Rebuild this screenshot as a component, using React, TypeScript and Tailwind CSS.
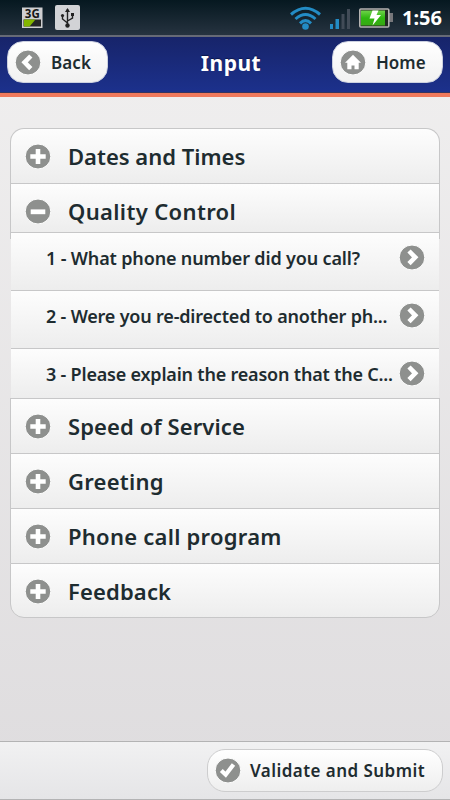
import type { ReactNode } from 'react';

type IconName = 'plus' | 'minus' | 'right' | 'left' | 'home' | 'check';

const ICONS: Record<IconName, ReactNode> = {
  plus: <path d="M13 5v15M5.3 12.5h15.4" strokeWidth="4.6" />,
  minus: <path d="M5.7 12.8h14.6" strokeWidth="4.8" />,
  right: <path d="M10 6l6.2 6.3-6.2 6.3" strokeWidth="4.6" />,
  left: <path d="M15.8 6l-6.2 6.3 6.2 6.3" strokeWidth="4.6" />,
  home: <path d="M13 4.8l8 7.9h-2.3v6.6h-4.2v-3.8h-3v3.8H7.300v-6.600H5z" fill="#fff" stroke="none" />,
  check: <path d="M6.3 12.500l4.400 4.200 7.800-10.200" strokeWidth="4.2" />,
};

function CircleIcon({ name }: { name: IconName }) {
  return (
    <svg width="26" height="25" viewBox="0 0 26 25" fill="none" stroke="#fff" className="shrink-0" aria-hidden="true">
      <ellipse cx="13" cy="12.5" rx="12.8" ry="12.5" fill="#8e908e" />
      {ICONS[name]}
    </svg>
  );
}

function StatusBar() {
  return (
    <div className="flex h-[37px] shrink-0 items-center border-b-2 border-[#666a76] bg-linear-to-b from-[#061820] to-[#263340] pl-[22px] pr-[9px]">
      <svg width="58" height="26" viewBox="0 0 58 26" aria-label="3G, USB connected">
        <rect x="0" y="2.5" width="20.5" height="20.5" fill="#cfcfd1" />
        <path d="M1.5 14.5h17.500v7H1.500z" fill="#242626" />
        <path d="M2 14.500h11.500l-6 7H2z" fill="#83b600" />
        <text x="10.3" y="13" textAnchor="middle" fontFamily="Noto Sans" fontSize="11.5" fontWeight="700" fill="#161616">3G</text>
        <rect x="33" y="0" width="25" height="25" rx="2" fill="#d2d3d6" />
        <g fill="none" stroke="#222" strokeWidth="1.4">
          <path d="M45.500 4v17M40.500 11v3l5 4M50.500 10v3l-5 3" />
        </g>
        <path d="M45.500 3l-2.500 4h5z" fill="#222" />
        <circle cx="45.500" cy="20.500" r="2.2" fill="#222" />
        <circle cx="40.500" cy="10.500" r="1.6" fill="#222" />
        <path d="M49 8h3v3h-3z" fill="#222" />
      </svg>
      <div className="ml-auto flex items-center">
        <svg width="31" height="24" viewBox="0 0 31 24" fill="none" stroke="#238cc5" strokeWidth="3" aria-label="Wi-Fi">
          <path d="M1 8.5Q15.5-4 30 8.5M5.500 13Q15.500 4 25.500 13M10 17.300Q15.500 12 21 17.300" />
          <circle cx="15.500" cy="20.500" r="3.3" fill="#238cc5" stroke="none" />
        </svg>
        <svg width="21" height="21" viewBox="0 0 21 21" className="ml-[9px] mr-px mt-px" aria-label="Signal strength">
          <path d="M0 16h3v5H0zM5.500 11h3.500v10H5.500z" fill="#238cc5" />
          <path d="M11.500 6h3v15h-3zM17 1h3v20h-3z" fill="#414b57" />
        </svg>
        <svg width="35" height="20" viewBox="0 0 35 20" className="ml-[7px]" aria-label="Battery charging">
          <defs>
            <linearGradient id="charge" x2="0" y2="1">
              <stop stopColor="#70d34b" />
              <stop offset=".5" stopColor="#2eb710" />
              <stop offset="1" stopColor="#37a714" />
            </linearGradient>
          </defs>
          <path d="M30 5h4v9h-4z" fill="#77777b" />
          <rect x="0.8" y="1" width="29" height="18" rx="1" fill="#222b22" stroke="#b5b3b2" strokeWidth="1.6" />
          <rect x="2" y="2.500" width="24" height="15" fill="url(#charge)" />
          <path d="M13.500 2.500h6l-2 4.500h4.500l-8.500 10.500 2-7H10.500z" fill="#fff" />
        </svg>
        <span className="ml-[8px] w-[39px] whitespace-nowrap text-[20px] font-bold leading-none text-white">1:56</span>
      </div>
    </div>
  );
}

function Header() {
  return (
    <header className="flex h-[60px] shrink-0 items-start justify-between border-b-4 border-[#ef795c] bg-linear-to-b from-[#17246a] to-[#1c318d] px-[7px] pt-[4px] shadow-[inset_0_-1px_#35345f]">
      <button className="flex h-[42px] w-[101px] items-center rounded-[16px] border border-[#cbd0df] bg-linear-to-b from-white to-[#f1f1f1] pl-[7px]">
        <CircleIcon name="left" />
        <span className="ml-[10px] mt-[2px] text-[17px] font-semibold tracking-[0.1px]">Back</span>
      </button>
      <h1 className="mt-[8px] pl-[22px] text-[21px] font-bold leading-[28px] tracking-[0.5px] text-white [text-shadow:0_-1px_1px_#0c174c]">Input</h1>
      <button className="flex h-[42px] w-[111px] items-center rounded-[16px] border border-[#cbd0df] bg-linear-to-b from-white to-[#f1f1f1] pl-[7px]">
        <CircleIcon name="home" />
        <span className="ml-[10px] mt-[2px] text-[17px] font-semibold">Home</span>
      </button>
    </header>
  );
}

function Section({ title, open = false, className }: { title: string; open?: boolean; className: string }) {
  return (
    <div className={`flex items-start border-x border-t border-[#c7c7c8] bg-linear-to-b from-[#fdfdfd] to-[#ededed] pl-[14px] pt-[15px] ${className}`}>
      <CircleIcon name={open ? 'minus' : 'plus'} />
      <h2 className="-mt-px ml-[17px] text-[22px] font-semibold leading-[26px]">{title}</h2>
    </div>
  );
}

function Question({ text, className }: { text: string; className: string }) {
  return (
    <div className={`mx-px flex items-start border-t border-[#c7c7c8] bg-linear-to-b from-[#fdfdfd] to-[#ededed] pl-[35px] pr-[14px] pt-[12px] ${className}`}>
      <p className="min-w-0 flex-1 whitespace-nowrap text-[18px] font-semibold leading-[26px]">{text}</p>
      <CircleIcon name="right" />
    </div>
  );
}

export default function App() {
  return (
    <div className="flex h-[800px] w-[450px] flex-col overflow-hidden bg-linear-to-b from-[#f1f0f0] to-[#dedcde] font-['Noto_Sans',sans-serif] text-[#1e2c30]">
      <StatusBar />
      <Header />
      <main className="flex flex-1 flex-col px-[10px] pt-[31px]">
        <Section title="Dates and Times" className="h-[55px] rounded-t-[14px]" />
        <Section
          title="Quality Control"
          open
          className="relative h-[49px] tracking-[0.35px] after:absolute after:-inset-x-px after:top-full after:h-[7px] after:border-x after:border-[#c7c7c8]"
        />
        <Question text="1 - What phone number did you call?" className="h-[58px] tracking-[-0.15px]" />
        <Question text="2 - Were you re-directed to another ph..." className="h-[58px] tracking-[-0.19px]" />
        <Question text="3 - Please explain the reason that the C..." className="h-[50px] tracking-[-0.2px]" />
        <Section title="Speed of Service" className="h-[55px] tracking-[0.1px]" />
        <Section title="Greeting" className="h-[55px] tracking-[0.25px]" />
        <Section title="Phone call program" className="h-[55px] tracking-[0.25px]" />
        <Section title="Feedback" className="h-[55px] rounded-b-[14px] border-b tracking-[0.15px]" />
      </main>
      <footer className="flex h-[59px] shrink-0 items-start justify-end border-y border-[#b3b3b4] bg-linear-to-b from-[#f1f1f2] to-[#e5e5e7] pr-[7px] pt-[7px]">
        <button className="flex h-[43px] w-[236px] items-center rounded-[18px] border border-[#cdcdce] bg-linear-to-b from-white to-[#eeeeee] pl-[7px]">
          <CircleIcon name="check" />
          <span className="ml-[9px] mt-px whitespace-nowrap text-[17px] font-semibold tracking-[0.45px]">Validate and Submit</span>
        </button>
      </footer>
    </div>
  );
}
